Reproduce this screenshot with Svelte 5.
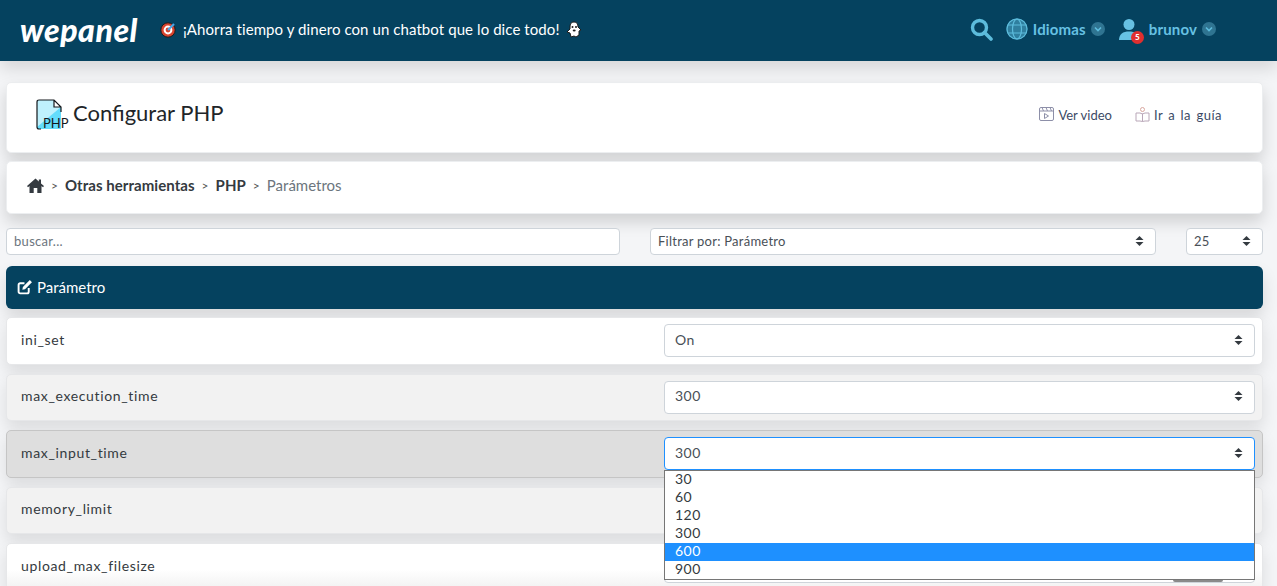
<script>
	const params = [
		{ name: "ini_set", value: "On", tone: "" },
		{ name: "max_execution_time", value: "300", tone: "alt" },
		{ name: "max_input_time", value: "300", tone: "active", open: true },
		{ name: "memory_limit", value: "", tone: "alt" },
		{ name: "upload_max_filesize", value: "", tone: "last" }
	];
	const options = ["30", "60", "120", "300", "600", "900"];
	const selected = "600";
</script>

{#snippet caret()}
	<svg class="caret" width="9" height="12" viewBox="0 0 9 12" aria-hidden="true">
		<path d="M4.5 1 8.5 5H.5zM4.5 11 .5 7h8z" fill="#343a40" />
	</svg>
{/snippet}

<header class="topbar">
	<div class="brand">wepanel</div>
	<div class="promo">
		<svg width="17" height="17" viewBox="0 0 17 17" aria-hidden="true">
			<circle cx="8" cy="9" r="7.200" fill="#d9442f" stroke="#1c1c1c" />
			<circle cx="8" cy="9" r="4.400" fill="#fff" />
			<circle cx="8" cy="9" r="2.400" fill="#d9442f" />
			<path d="M8 9 14 3" stroke="#4aa8e8" stroke-width="2.200" />
		</svg>
		<span>¡Ahorra tiempo y dinero con un chatbot que lo dice todo!</span>
		<svg width="16" height="17" viewBox="0 0 16 17" aria-hidden="true">
			<path d="M8 1c3 0 4 2 4 5l3 3-2 1v4l-3 2-2-1-3 1-1-4-3-1 3-3V6c0-3 1-5 4-5z" fill="#fff" stroke="#1c1c1c" />
			<circle cx="6.500" cy="6" r="1" fill="#1c1c1c" />
			<circle cx="10" cy="6" r="1" fill="#1c1c1c" />
			<ellipse cx="8.200" cy="9.500" rx="1.500" ry="1" fill="#1c1c1c" />
		</svg>
	</div>
	<nav class="usernav">
		<svg class="search" width="23" height="23" viewBox="0 0 23 23" aria-hidden="true">
			<circle cx="9.500" cy="9.500" r="7" fill="none" stroke="#5dbcdc" stroke-width="3.400" />
			<path d="M14.500 14.500 21 21" stroke="#5dbcdc" stroke-width="3.600" stroke-linecap="round" />
		</svg>
		<svg class="globe" width="22" height="22" viewBox="0 0 22 22" aria-hidden="true">
			<circle cx="11" cy="11" r="10.500" fill="#2f7f9f" />
			<g fill="none" stroke="#5dbcdc" stroke-width="1.200">
				<circle cx="11" cy="11" r="10" />
				<ellipse cx="11" cy="11" rx="4.500" ry="10" />
				<path d="M2 7h18M2 15h18" />
			</g>
		</svg>
		<span class="navlabel">Idiomas</span>
		<span class="chev">
			<svg width="8" height="6" viewBox="0 0 8 6" aria-hidden="true"><path d="M1 1.500 4 4.500 7 1.500" fill="none" stroke="#5dbcdc" stroke-width="1.600" /></svg>
		</span>
		<span class="avatar">
			<svg width="22" height="23" viewBox="0 0 22 23" aria-hidden="true">
				<circle cx="11" cy="6.500" r="5.500" fill="#67c1e3" />
				<path d="M1 22c0-6 4-8.500 10-8.500S21 16 21 22z" fill="#67c1e3" />
			</svg>
			<span class="badge">5</span>
		</span>
		<span class="navlabel">brunov</span>
		<span class="chev">
			<svg width="8" height="6" viewBox="0 0 8 6" aria-hidden="true"><path d="M1 1.500 4 4.500 7 1.500" fill="none" stroke="#5dbcdc" stroke-width="1.600" /></svg>
		</span>
	</nav>
</header>

<main class="page">
	<section class="card titlecard">
		<div class="title">
			<svg width="30" height="31" viewBox="0 0 30 31" aria-hidden="true">
				<path d="M1 30V3q0-2 2-2h15l7 7v22z" fill="#63dcfb" />
				<path d="M1 30V3q0-2 2-2h15l7 7L1 28z" fill="#bff1fd" />
				<path d="M18 1v7h7z" fill="#fff" />
				<path d="M5 30H3q-2 0-2-2V3q0-2 2-2h15l7 7v5M18 1v7h7" fill="none" stroke="#15181c" stroke-width="1.200" />
			</svg>
			<span class="phptag">PHP</span>
			<h1>Configurar PHP</h1>
		</div>
		<div class="links">
			<a href="#video">
				<svg width="15" height="15" viewBox="0 0 15 15" aria-hidden="true">
					<g fill="none" stroke="#8d8fa8">
						<rect x=".5" y=".5" width="14" height="13" rx="1.500" />
						<path d="M.5 4h14M3 .5l1.500 3.500M7 .5l1.500 3.500M11 .5l1.500 3.500M5.500 6.500v5l4-2.500z" />
					</g>
				</svg>
				Ver video
			</a>
			<a class="guide" href="#guia">
				<svg width="15" height="15" viewBox="0 0 15 15" aria-hidden="true">
					<g fill="none" stroke="#d9a7a0">
						<circle cx="7.500" cy="2.500" r="2" />
						<path d="M7.500 6.500v8M1 6h4l2.500 1L10 6h4v8h-4l-2.500.5L5 14H1z" stroke="#b9a7b8" />
					</g>
				</svg>
				Ir a la guía
			</a>
		</div>
	</section>

	<section class="card crumbs">
		<svg width="17" height="15" viewBox="0 0 17 15" aria-hidden="true">
			<path d="M8.500.5 0 8l1 1.200L2.500 8v7h4.200v-5h3.600v5h4.200V8L16 9.200 17 8l-3-2.600V1.500h-2.200v2L8.500.5z" fill="#343a40" />
		</svg>
		<span class="sep">&gt;</span>
		<a href="#otras">Otras herramientas</a>
		<span class="sep">&gt;</span>
		<a href="#php">PHP</a>
		<span class="sep">&gt;</span>
		<span class="current">Parámetros</span>
	</section>

	<div class="filters">
		<input class="search-input" type="text" placeholder="buscar..." />
		<div class="field filter-by">Filtrar por: Parámetro {@render caret()}</div>
		<div class="field page-size">25 {@render caret()}</div>
	</div>

	<div class="tablehead">
		<svg width="16" height="16" viewBox="0 0 15 15" aria-hidden="true">
			<path d="M11 8.500V12a1.500 1.500 0 0 1-1.500 1.500H3A1.500 1.500 0 0 1 1.500 12V5.500A1.500 1.500 0 0 1 3 4h4" fill="none" stroke="#fff" stroke-width="1.800" />
			<path d="M5.500 7.500 12 1l2 2-6.500 6.500-2.500.5z" fill="#fff" />
		</svg>
		Parámetro
	</div>

	<div class="rows">
		{#each params as p}
			<div class="row {p.tone}">
				<span class="pname">{p.name}</span>
				<div class="rowselect" class:focused={p.open}>
					<div class="field value">{p.value} {@render caret()}</div>
					{#if p.open}
						<div class="thumb"></div>
						<ul class="menu">
							{#each options as o}
								<li class:sel={o === selected}>{o}</li>
							{/each}
						</ul>
					{/if}
				</div>
			</div>
		{/each}
	</div>
</main>

<style>
	:global(html), :global(body) {
		margin: 0;
		height: 586px;
		overflow: hidden;
		background: #f4f5f7;
	}
	:global(body) {
		font-family: "Lato", "Noto Sans", sans-serif;
		color: #343a40;
	}

	.topbar {
		height: 61px;
		background: #05425f;
		display: flex;
		align-items: center;
		padding: 0 61px 3px 20px;
		box-sizing: border-box;
		box-shadow: 0 8px 16px rgba(0, 0, 0, 0.12);
		position: relative;
	}
	.brand {
		font-size: 32px;
		font-weight: 900;
		font-style: italic;
		color: #fff;
		width: 140px;
		letter-spacing: 0.5px;
	}
	.promo {
		display: flex;
		align-items: center;
		gap: 6px;
		color: #fff;
		font-size: 15px;
		letter-spacing: 0.08px;
	}
	.usernav {
		margin-left: auto;
		display: flex;
		align-items: center;
		color: #67c1e3;
	}
	.search { margin-right: 13px; }
	.globe { margin-right: 5px; }
	.navlabel {
		font-size: 15px;
		font-weight: 700;
		letter-spacing: 0.15px;
	}
	.chev {
		width: 14px;
		height: 14px;
		margin-left: 5px;
		border-radius: 50%;
		background: #2f7491;
		display: flex;
		align-items: center;
		justify-content: center;
	}
	.avatar {
		position: relative;
		display: flex;
		margin: 0 9px 0 13px;
	}
	.badge {
		position: absolute;
		right: -4px;
		bottom: -3px;
		width: 13px;
		height: 13px;
		border-radius: 50%;
		background: #e02f2f;
		color: #fff;
		font-size: 8px;
		font-weight: 900;
		text-align: center;
		line-height: 13px;
	}

	.page {
		padding: 21px 14px 0 6px;
	}
	.card {
		background: #fff;
		border-radius: 5px;
		width: 1257px;
		box-shadow: 0 8px 16px rgba(0, 0, 0, 0.15);
		border: 1px solid #eceef0;
		box-sizing: border-box;
	}
	.titlecard {
		height: 71px;
		display: flex;
		align-items: center;
		justify-content: space-between;
		padding: 0 40px 6px 29px;
	}
	.title {
		display: flex;
		align-items: center;
		gap: 7px;
		position: relative;
	}
	.phptag {
		position: absolute;
		left: 7px;
		bottom: -1px;
		font-size: 13px;
		color: #15181c;
	}
	h1 {
		margin: 0 0 4px;
		font-size: 22px;
		font-weight: 400;
		color: #212529;
	}
	.links {
		display: flex;
		gap: 23px;
	}
	.links a {
		display: flex;
		align-items: center;
		gap: 4px;
		font-size: 13px;
		color: #3b4a66;
		text-decoration: none;
	}
	.links .guide {
		word-spacing: 1.5px;
		letter-spacing: 0.5px;
	}
	.crumbs {
		height: 53px;
		margin-top: 8px;
		padding: 0 0 5px 20px;
		display: flex;
		align-items: center;
		font-size: 15px;
	}
	.crumbs a {
		font-weight: 700;
		color: #343a40;
		text-decoration: none;
		letter-spacing: 0.05px;
	}
	.sep {
		margin: 0 7px 0 7px;
		font-size: 12px;
		color: #555;
	}
	.current { color: #6c757d; }

	.filters {
		display: flex;
		margin-top: 14px;
		height: 27px;
	}
	.search-input, .field {
		box-sizing: border-box;
		background: #fff;
		border: 1px solid #ced4da;
		border-radius: 4px;
		font-family: inherit;
		font-size: 13px;
		line-height: 22px;
		color: #495057;
	}
	.search-input {
		width: 614px;
		padding: 0 7px 1px;
		outline: none;
		letter-spacing: 0.3px;
	}
	.search-input::placeholder { color: #6c757d; }
	.field {
		display: flex;
		align-items: center;
		justify-content: space-between;
		padding: 0 11px 1px 7px;
		letter-spacing: 0.25px;
	}
	.filter-by {
		width: 506px;
		margin-left: 30px;
	}
	.page-size {
		width: 77px;
		margin-left: 30px;
	}

	.tablehead {
		margin-top: 11px;
		height: 43px;
		background: #05425f;
		border-radius: 6px;
		width: 1257px;
		box-sizing: border-box;
		color: #fff;
		font-size: 15px;
		display: flex;
		align-items: center;
		gap: 4px;
		padding: 0 0 2px 11px;
		box-shadow: 0 8px 16px rgba(0, 0, 0, 0.12);
	}

	.rows {
		margin-top: 8px;
		width: 1257px;
		display: flex;
		flex-direction: column;
		gap: 9px;
	}
	.row {
		height: 47.5px;
		flex: none;
		box-sizing: border-box;
		background: #fff;
		border: 1px solid #e6e7e9;
		border-radius: 5px;
		display: flex;
		align-items: center;
		justify-content: space-between;
		padding: 0 7px 0 14px;
		box-shadow: 0 8px 16px rgba(0, 0, 0, 0.1);
	}
	.row.alt { background: #f2f2f2; }
	.row.active {
		background: #dedede;
		border-color: #c5c5c5;
	}
	.row.last {
		background: linear-gradient(#fff 55%, #f1f1f1);
	}
	.pname {
		font-size: 14px;
		color: #343a40;
		letter-spacing: 0.65px;
		margin-bottom: 3px;
	}
	.rowselect {
		width: 591px;
		position: relative;
	}
	.value {
		height: 33px;
		font-size: 14px;
		padding: 0 11px 2px 10px;
		letter-spacing: 0.5px;
	}
	.focused .value {
		border-color: #1e90ff;
	}
	.thumb {
		position: absolute;
		top: 142px;
		left: 509px;
		width: 50px;
		height: 3px;
		background: #8a8a8a;
		border-radius: 0 0 2px 2px;
		z-index: 4;
	}
	.menu {
		position: absolute;
		top: 33px;
		left: 0;
		right: 0;
		margin: 0;
		padding: 0;
		list-style: none;
		background: #fff;
		border: 1px solid #767676;
		box-sizing: border-box;
		z-index: 5;
		font-size: 14px;
		color: #343a40;
		letter-spacing: 0.5px;
	}
	.menu li {
		height: 18px;
		line-height: 16px;
		padding-left: 10px;
	}
	.menu li.sel {
		background: #1e90ff;
		color: #fff;
	}
</style>
